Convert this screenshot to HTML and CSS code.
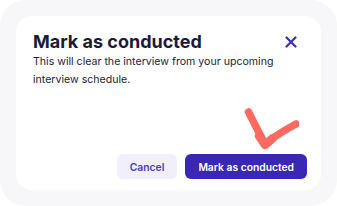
FILE: index.html
```html
<!DOCTYPE html>
<html>
<head>
<meta charset="utf-8">
<link rel="stylesheet" href="styles.css">
</head>
<body>
<div class="backdrop">
  <div class="dialog">
    <div class="header">
      <h1 class="title">Mark as conducted</h1>
      <button class="close" aria-label="Close">
        <svg width="12" height="12" viewBox="0 0 12 12"><path d="M1.5 1.5 L10.5 10.5 M10.5 1.5 L1.5 10.5" stroke="#3b2db6" stroke-width="2.2" stroke-linecap="round"/></svg>
      </button>
    </div>
    <p class="desc">This will clear the interview from your upcoming interview schedule.</p>
    <div class="footer">
      <button class="btn btn-secondary">Cancel</button>
      <button class="btn btn-primary">Mark as conducted</button>
    </div>
    <svg class="check" width="60" height="45" viewBox="0 0 60 45"><path d="M9.5 7 Q17 22 26 39 Q40 28 57 19" fill="none" stroke="#ff6a61" stroke-width="7.5" stroke-linecap="round" stroke-linejoin="round"/><path d="M20 31 L26 40 L34 33" fill="none" stroke="#ff6a61" stroke-width="8.5" stroke-linecap="round" stroke-linejoin="round"/></svg>
  </div>
</div>
</body>
</html>
```
FILE: styles.css
```css
* { box-sizing: border-box; }
html, body { margin: 0; padding: 0; background: #ffffff; }
body { width: 337px; height: 206px; overflow: hidden; font-family: Inter, "Liberation Sans", sans-serif; }
.backdrop {
  width: 337px;
  height: 206px;
  background: #f7f7fa;
  border-radius: 26px;
  padding: 16px;
}
.dialog {
  position: relative;
  width: 305px;
  height: 174px;
  background: #ffffff;
  border-radius: 16px;
  padding: 15px 14px 11px 17px;
  display: flex;
  flex-direction: column;
}
.header {
  display: flex;
  justify-content: space-between;
  align-items: center;
}
.title {
  margin: 0;
  font-size: 18px;
  line-height: 22px;
  font-weight: 700;
  color: #1c1a38;
}
.close {
  width: 20px;
  height: 20px;
  padding: 0;
  margin-right: 6px;
  border: 0;
  background: none;
  display: flex;
  align-items: center;
  justify-content: center;
}
.desc {
  margin: 0;
  font-size: 10.6px;
  line-height: 18px;
  color: #25233a;
  max-width: 250px;
}
.footer {
  margin-top: auto;
  display: flex;
  justify-content: flex-end;
  gap: 8px;
}
.btn {
  height: 25px;
  border: 0;
  border-radius: 6px;
  font-family: Inter, "Liberation Sans", sans-serif;
  font-size: 10.3px;
  font-weight: 600;
  padding: 0 13px;
}
.btn-secondary { background: #f1effa; color: #4c3dc2; }
.btn-primary { background: #3828b3; color: #ffffff; }
.check {
  position: absolute;
  left: 223px;
  top: 89px;
}
```
